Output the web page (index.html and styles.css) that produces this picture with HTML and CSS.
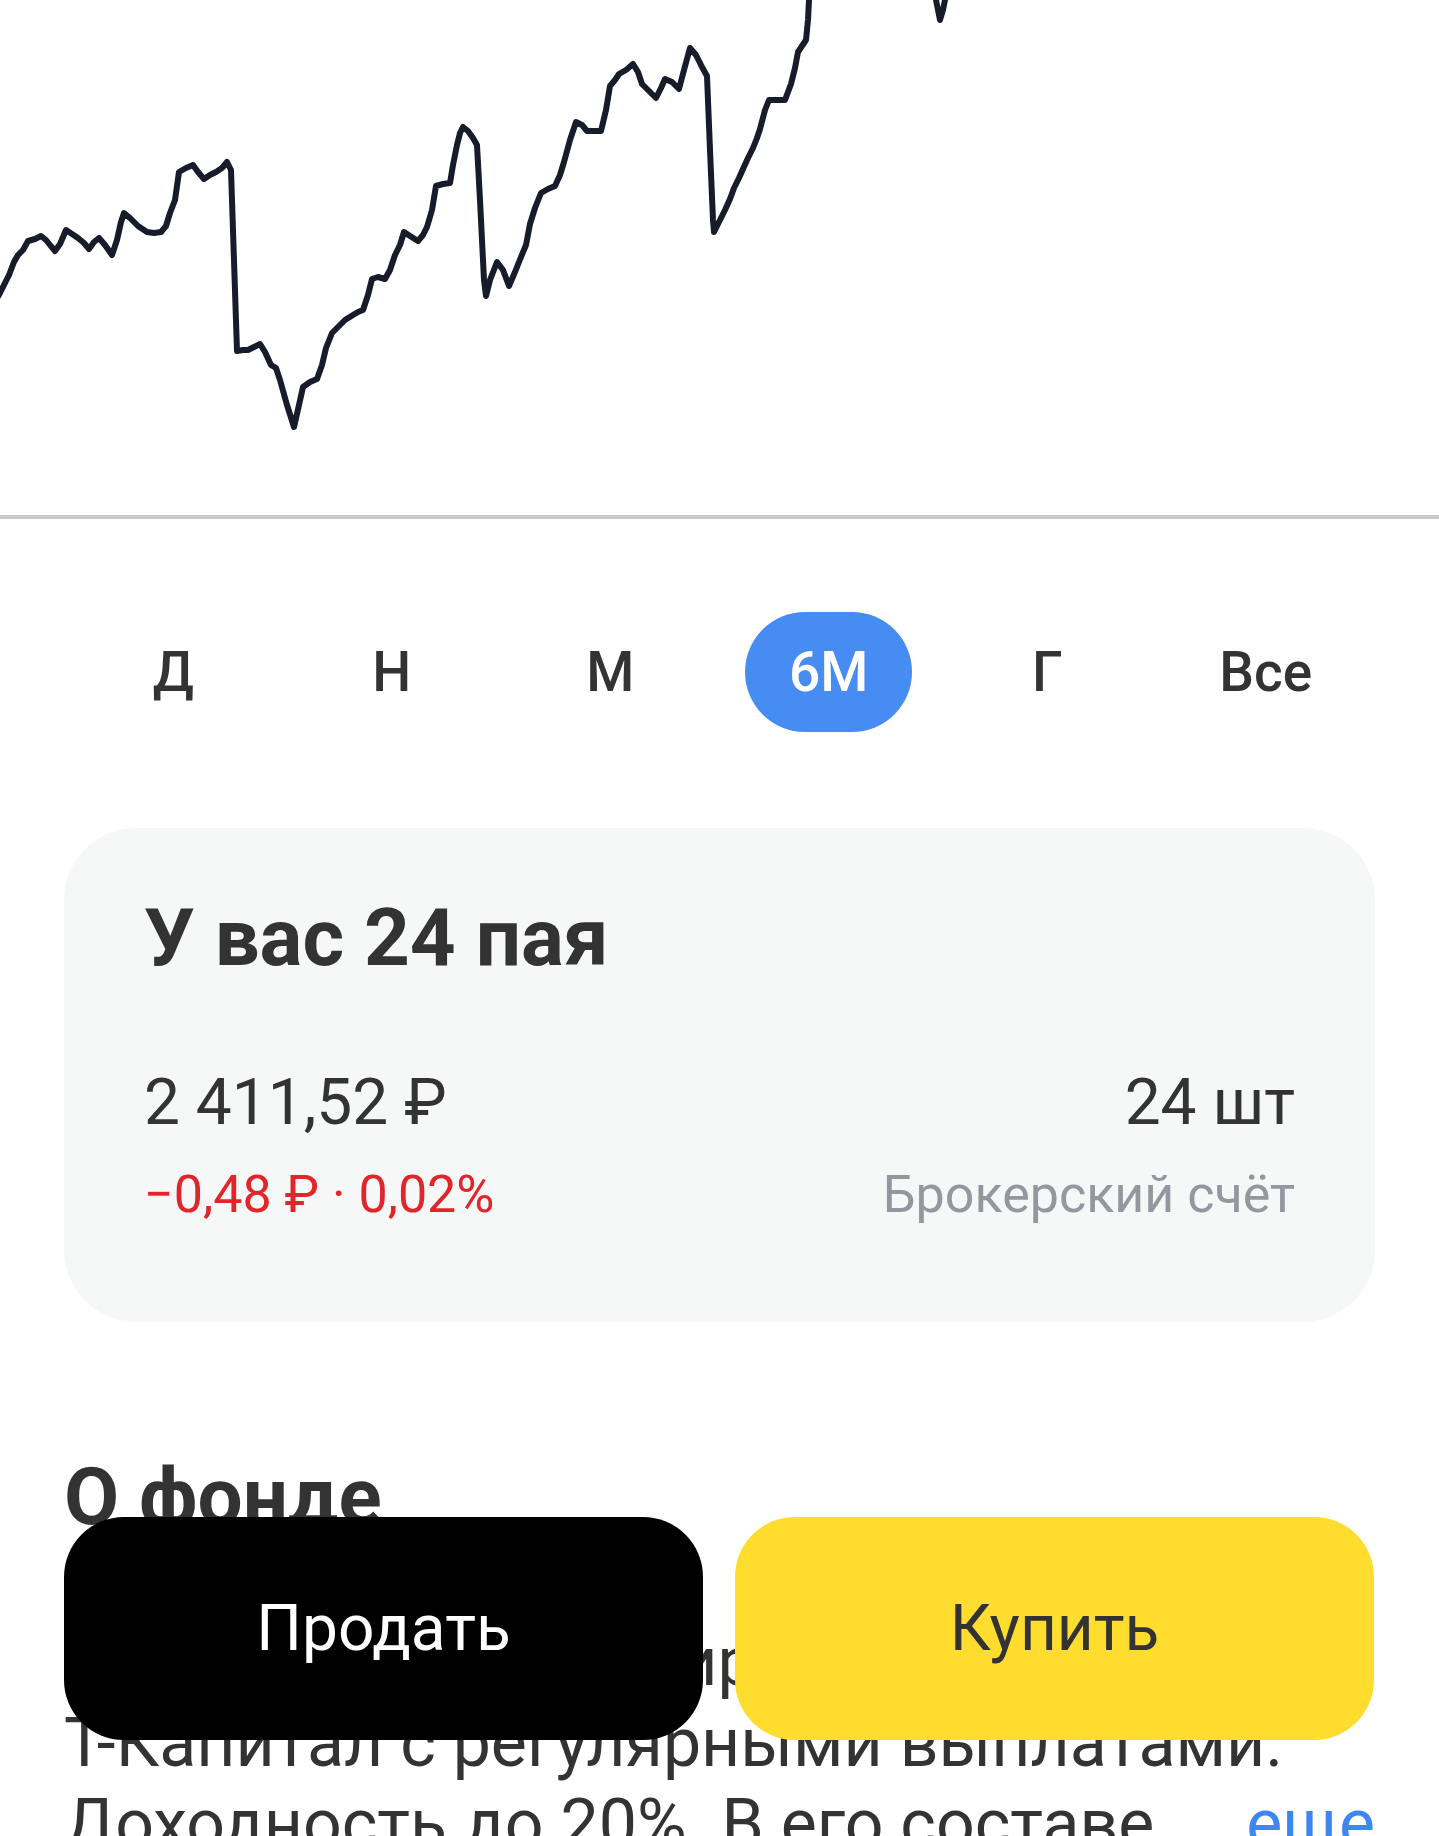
FILE: index.html
```html
<!DOCTYPE html>
<html lang="ru">
<head>
  <meta charset="UTF-8" />
  <meta name="viewport" content="width=device-width, initial-scale=1.0"/>
  <title>Фонд</title>
  <link rel="stylesheet" href="styles.css">
</head>
<body>
  <div class="chart">
    <svg width="1439" height="515" viewBox="0 0 1439 515">
      <polyline class="chart-line" points="-10,310 0,293 9,275 14,262 18,255 23,250 28,241 35,239 41,236 46,240 50,245 55,251 60,244 66,230 72,234 78,238 84,243 89,249 94,242 99,238 105,245 112,255 117,240 121,222 124,213 130,218 138,226 147,232 154,233 161,232 166,226 170,213 175,200 179,172 186,168 193,165 198,172 204,179 210,175 216,172 222,168 227,162 231,170 237,351 243,350 248,350 254,347 260,344 265,352 271,365 276,368 280,380 287,405 294,427 299,405 303,387 310,382 317,379 322,365 326,348 332,333 338,327 345,320 353,315 358,312 363,310 368,295 372,279 378,277 385,279 390,270 395,255 400,245 404,232 410,236 418,241 423,235 427,227 432,210 436,186 443,184 450,183 453,165 457,145 460,133 463,127 468,131 473,138 477,145 480,200 484,280 486,296 490,280 497,262 503,270 509,286 515,272 521,257 526,245 530,224 535,208 541,193 548,189 555,186 560,175 564,162 570,140 576,122 582,125 587,131 594,131 601,131 606,110 610,86 615,80 619,74 626,70 633,64 638,72 642,84 648,90 656,98 661,88 665,79 672,82 679,89 684,70 690,48 696,55 702,67 707,76 710,150 713,220 714,232 719,222 725,210 730,199 734,188 739,178 743,169 748,158 753,148 757,138 760,129 765,110 769,100 777,100 785,100 788,92 791,84 795,68 798,52 802,46 806,40 808,20 809,0 812,-80 900,-120 930,-60 936,0 940,20 943,10 945,0 950,-60 1000,-120"/>
    </svg>
  </div>

  <div class="periods">
    <span class="period">Д</span>
    <span class="period">Н</span>
    <span class="period">М</span>
    <span class="period active">6М</span>
    <span class="period">Г</span>
    <span class="period">Все</span>
  </div>

  <div class="holding">
    <h2 class="holding-title">У вас 24 пая</h2>
    <div class="holding-row">
      <div>
        <div class="holding-value">2 411,52 ₽</div>
        <div class="holding-sub negative">−0,48 ₽ · 0,02%</div>
      </div>
      <div class="holding-right">
        <div class="holding-value">24 шт</div>
        <div class="holding-sub muted">Брокерский счёт</div>
      </div>
    </div>
  </div>

  <div class="about">
    <h2 class="about-title">О фонде</h2>
    <p class="about-text">
      Такой фонд ориентирован на доход от <span class="nowrap">Т-Капитал</span> с регулярными выплатами. Доходность до 20%. В его составе преимущественно облигации с плавающим купоном и короткой дюрацией.
      <a class="more" href="#">еще</a>
    </p>
  </div>

  <div class="actions">
    <button class="btn btn-sell">Продать</button>
    <button class="btn btn-buy">Купить</button>
  </div>
</body>
</html>
```

FILE: styles.css
```css
html, body {
  height: 1836px;
  overflow: hidden;
}
body {
  margin: 0;
  font-family: Roboto, "Noto Sans", sans-serif;
  color: #333;
  background-color: #fff;
}
.chart {
  height: 515px;
  border-bottom: 4px solid #cacaca;
}
.chart svg {
  display: block;
}
.chart-line {
  fill: none;
  stroke: #161c29;
  stroke-width: 6;
  stroke-linejoin: round;
  stroke-linecap: round;
}
.periods {
  display: grid;
  grid-template-columns: repeat(6, 1fr);
  padding: 93px 64px 0;
}
.period {
  justify-self: center;
  display: flex;
  align-items: center;
  height: 120px;
  padding: 0 44px;
  border-radius: 60px;
  font-size: 55px;
  font-weight: 500;
}
.period.active {
  background-color: #478cf2;
  color: #fff;
}
.holding {
  margin: 96px 64px 0;
  padding: 63px 80px 96px;
  background-color: #f6f7f7;
  border-radius: 72px;
}
.holding-title {
  margin: 0;
  font-size: 80px;
  line-height: 94px;
  font-weight: 700;
}
.holding-row {
  display: flex;
  justify-content: space-between;
  margin-top: 80px;
}
.holding-right {
  text-align: right;
}
.holding-value {
  font-size: 64px;
  line-height: 76px;
}
.holding-sub {
  margin-top: 23px;
  font-size: 52px;
  line-height: 62px;
}
.negative {
  color: #e0252b;
}
.muted {
  color: #9398a0;
}
.about {
  padding: 128px 64px 0;
}
.about-title {
  margin: 0;
  font-size: 80px;
  line-height: 94px;
  font-weight: 700;
}
.about-text {
  position: relative;
  margin: 78px 0 0;
  max-height: 243px;
  overflow: hidden;
  font-size: 68px;
  line-height: 81px;
}
.nowrap {
  white-space: nowrap;
}
.more {
  position: absolute;
  right: 0;
  top: 162px;
  padding-left: 100px;
  background: linear-gradient(to right, rgba(255,255,255,0), #fff 85px);
  color: #3d87f2;
  text-decoration: none;
}
.actions {
  position: fixed;
  left: 64px;
  right: 65px;
  bottom: 96px;
  display: grid;
  grid-template-columns: 1fr 1fr;
  gap: 32px;
}
.btn {
  height: 223px;
  border: none;
  border-radius: 60px;
  font-family: inherit;
  font-size: 64px;
  cursor: pointer;
}
.btn-sell {
  background-color: #000;
  color: #fff;
}
.btn-buy {
  background-color: #fedd2e;
  color: #333;
}
```
